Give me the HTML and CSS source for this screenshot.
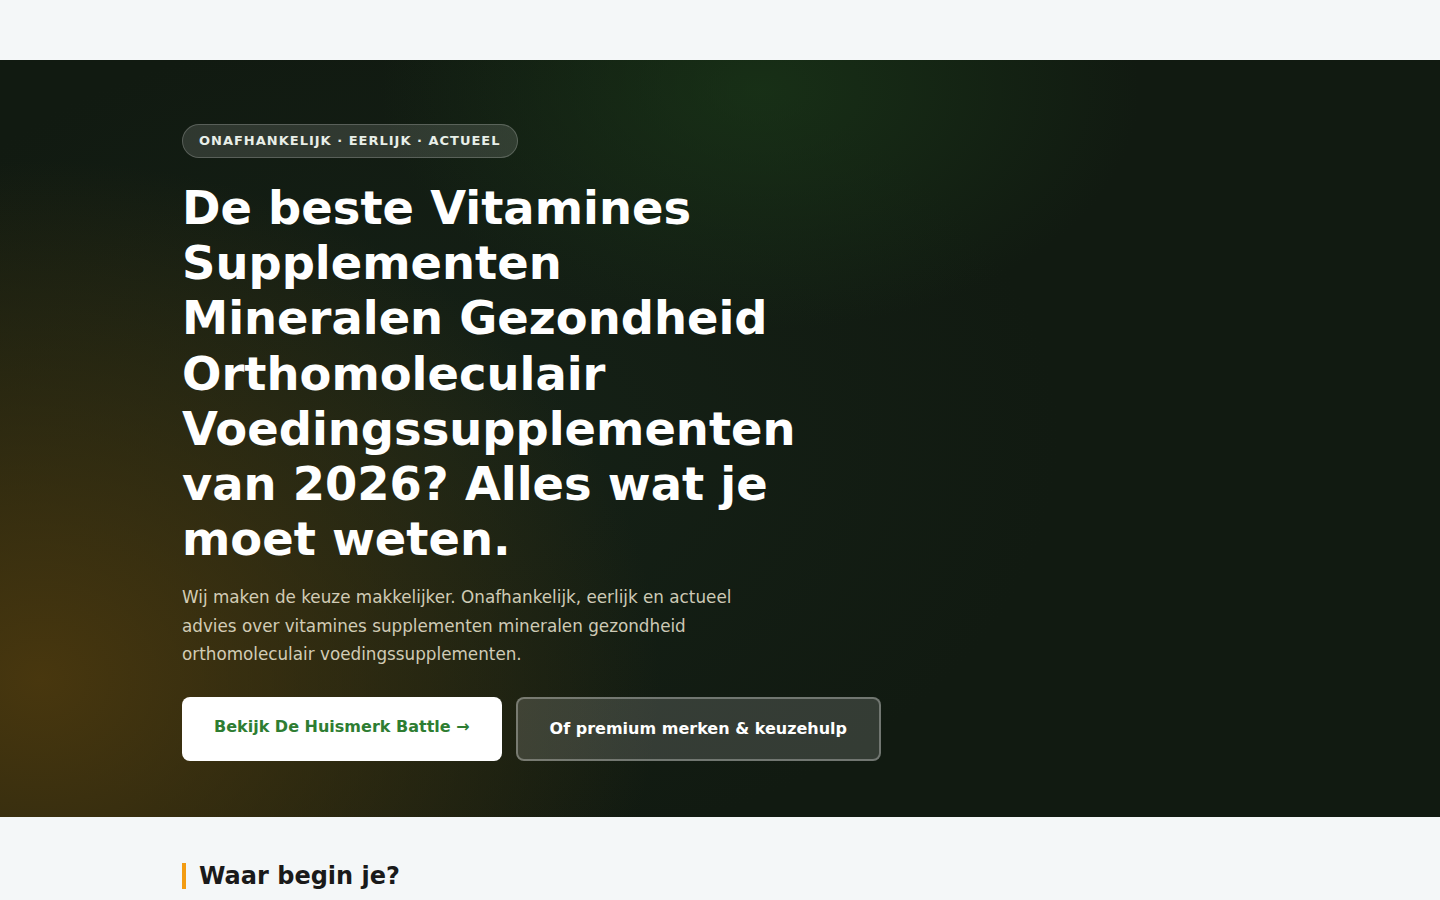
FILE: index.html
```html
<!DOCTYPE html>
<html lang="nl">
<head>
<meta charset="utf-8">
<title>De beste Vitamines Supplementen 2026</title>
<link rel="stylesheet" href="styles.css">
</head>
<body>
<header class="topbar"></header>
<section class="hero">
  <div class="container">
    <span class="badge">ONAFHANKELIJK · EERLIJK · ACTUEEL</span>
    <h1 class="hero-title">De beste Vitamines Supplementen Mineralen Gezondheid Orthomoleculair Voedingssupplementen van 2026? Alles wat je moet weten.</h1>
    <p class="hero-lead">Wij maken de keuze makkelijker. Onafhankelijk, eerlijk en actueel advies over vitamines supplementen mineralen gezondheid orthomoleculair voedingssupplementen.</p>
    <div class="hero-actions">
      <a class="btn btn-primary" href="#">Bekijk De Huismerk Battle →</a>
      <a class="btn btn-ghost" href="#">Of premium merken &amp; keuzehulp</a>
    </div>
  </div>
</section>
<section class="start">
  <div class="container">
    <h2 class="section-title">Waar begin je?</h2>
  </div>
</section>
</body>
</html>
```

FILE: styles.css
```css
* { box-sizing: border-box; }
html, body { margin: 0; padding: 0; }
body {
  font-family: "DejaVu Sans", Verdana, sans-serif;
  background: #f4f7f8;
  color: #1a1a1a;
}
.container {
  max-width: 1076px;
  margin: 0 auto;
}
.topbar {
  height: 60px;
  background: #f4f7f8;
}
.hero {
  background-color: #111a11;
  background-image:
    radial-gradient(ellipse 620px 520px at 40px 620px, rgba(78, 58, 14, 0.9), rgba(78, 58, 14, 0) 100%),
    radial-gradient(ellipse 380px 240px at 760px 30px, rgba(28, 62, 26, 0.6), rgba(28, 62, 26, 0) 100%),
    radial-gradient(ellipse 620px 420px at 440px 380px, rgba(24, 38, 26, 0.6), rgba(24, 38, 26, 0) 100%);
  padding: 64px 0 56px;
  color: #fff;
}
.badge {
  display: inline-block;
  padding: 8px 16px;
  border-radius: 999px;
  background: rgba(255, 255, 255, 0.13);
  border: 1px solid rgba(255, 255, 255, 0.2);
  font-size: 13px;
  font-weight: bold;
  letter-spacing: 1px;
  line-height: 16px;
  color: #e8efe8;
}
.hero-title {
  margin: 23px 0 0;
  max-width: 640px;
  font-size: 46.4px;
  line-height: 55.2px;
  font-weight: bold;
  color: #fff;
}
.hero-lead {
  margin: 16px 0 0;
  max-width: 590px;
  font-size: 16.8px;
  line-height: 28.5px;
  color: rgba(240, 234, 214, 0.85);
}
.hero-actions {
  display: flex;
  gap: 14px;
  margin-top: 28px;
}
.btn {
  display: inline-flex;
  align-items: center;
  justify-content: center;
  height: 64px;
  padding: 0 32px;
  border-radius: 8px;
  font-size: 16px;
  font-weight: bold;
  white-space: nowrap;
  text-decoration: none;
}
.btn-primary {
  background: #fff;
  color: #2e7d32;
  padding-bottom: 4px;
}
.btn-ghost {
  background: rgba(255, 255, 255, 0.15);
  border: 2px solid rgba(255, 255, 255, 0.3);
  color: #fff;
}
.start {
  padding: 46px 0 40px;
  background: #f4f7f8;
}
.section-title {
  margin: 0;
  padding-left: 13px;
  border-left: 4px solid #f39c12;
  font-size: 24px;
  line-height: 26px;
  font-weight: bold;
  color: #1a1a1a;
}
```
